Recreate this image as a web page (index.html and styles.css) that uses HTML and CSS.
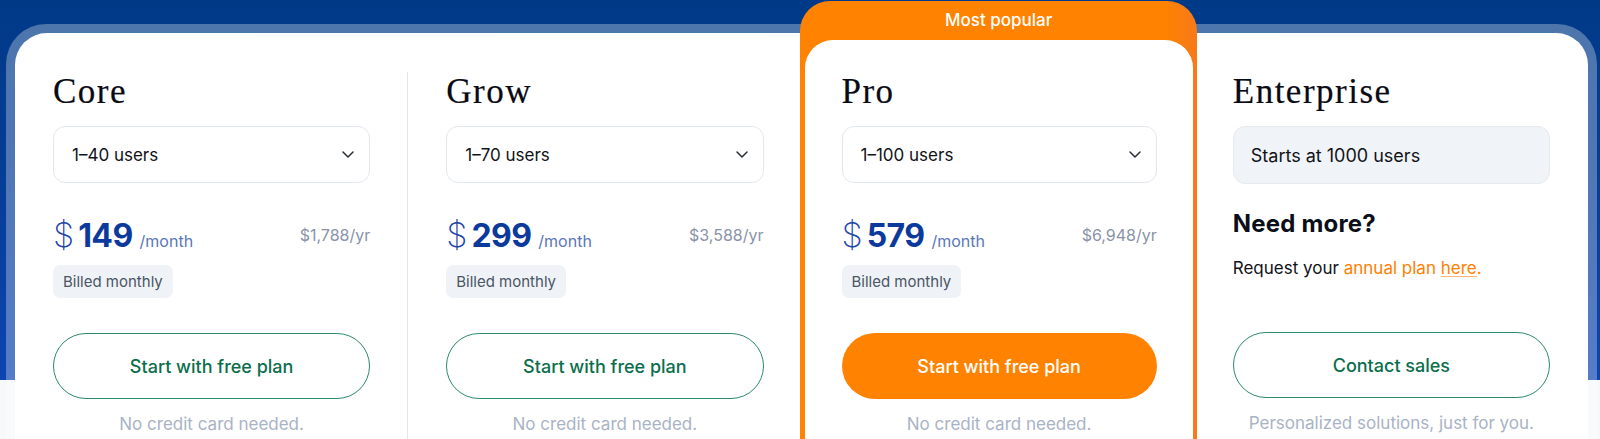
FILE: index.html
```html
<!DOCTYPE html>
<html lang="en">
<head>
<meta charset="utf-8">
<title>Pricing</title>
<link rel="stylesheet" href="styles.css">
</head>
<body>
<div class="page">
<div class="frame">
  <div class="card">
    <section class="col col-core">
      <h2 class="plan">Core</h2>
      <div class="select"><span>1–40 users</span><svg class="chev" viewBox="0 0 12 7" width="12" height="7"><path d="M1 1l5 5 5-5" fill="none" stroke="#2b2f36" stroke-width="1.5" stroke-linecap="round" stroke-linejoin="round"/></svg></div>
      <div class="price"><span class="cur">$</span><span class="amt">149</span><span class="per">/month</span><span class="yr">$1,788/yr</span></div>
      <div class="chip">Billed monthly</div>
      <a class="btn btn-outline">Start with free plan</a>
      <p class="note">No credit card needed.</p>
    </section>
    <section class="col">
      <h2 class="plan">Grow</h2>
      <div class="select"><span>1–70 users</span><svg class="chev" viewBox="0 0 12 7" width="12" height="7"><path d="M1 1l5 5 5-5" fill="none" stroke="#2b2f36" stroke-width="1.5" stroke-linecap="round" stroke-linejoin="round"/></svg></div>
      <div class="price"><span class="cur">$</span><span class="amt">299</span><span class="per">/month</span><span class="yr">$3,588/yr</span></div>
      <div class="chip">Billed monthly</div>
      <a class="btn btn-outline">Start with free plan</a>
      <p class="note">No credit card needed.</p>
    </section>
    <section class="pro">
      <div class="pro-tag">Most popular</div>
      <div class="col pro-inner">
        <h2 class="plan">Pro</h2>
        <div class="select"><span>1–100 users</span><svg class="chev" viewBox="0 0 12 7" width="12" height="7"><path d="M1 1l5 5 5-5" fill="none" stroke="#2b2f36" stroke-width="1.5" stroke-linecap="round" stroke-linejoin="round"/></svg></div>
        <div class="price"><span class="cur">$</span><span class="amt">579</span><span class="per">/month</span><span class="yr">$6,948/yr</span></div>
        <div class="chip">Billed monthly</div>
        <a class="btn btn-fill">Start with free plan</a>
        <p class="note">No credit card needed.</p>
      </div>
    </section>
    <section class="col">
      <h2 class="plan">Enterprise</h2>
      <div class="starts">Starts at 1000 users</div>
      <h3 class="more">Need more?</h3>
      <p class="req">Request your <span class="orange">annual plan <u>here</u>.</span></p>
      <a class="btn btn-outline btn-ent">Contact sales</a>
      <p class="note">Personalized solutions, just for you.</p>
    </section>
  </div>
</div>
</div>
</body>
</html>
```
FILE: styles.css
```css
* { box-sizing: border-box; }
html, body { margin: 0; padding: 0; height: 439px; overflow: hidden; }
body {
  font-family: Inter, "Noto Sans", sans-serif;
  background: #f7f8fa;
}
.page {
  height: 439px;
  padding: 24px 3px 0 6px;
  background: linear-gradient(to bottom, #003a87 0px, #063d96 180px, #0c45b0 380px, #f7f8fa 380px, #f7f8fa 100%);
}
.frame {
  height: 415px;
  padding: 9px 9px 0;
  background: rgba(255, 255, 255, 0.3);
  border-radius: 40px 40px 0 0;
}
.card {
  background: #fff;
  border-radius: 32px 32px 0 0;
  height: 100%;
  display: grid;
  grid-template-columns: repeat(4, 1fr);
}
.col {
  padding: 39px 38px 0;
  display: flex;
  flex-direction: column;
  min-width: 0;
}
.col-core {
  background: linear-gradient(#dfe6ef, #dfe6ef) no-repeat right 39px / 1px 100%;
}
.plan {
  margin: 0;
  font-family: "Liberation Serif", "DejaVu Serif", serif;
  font-weight: 400;
  font-size: 35px;
  line-height: 40px;
  letter-spacing: 1.5px;
  color: #0a0a14;
  -webkit-text-stroke: 0.2px #0a0a14;
}
.select {
  margin-top: 14px;
  height: 57px;
  border: 1px solid #e3e8ef;
  border-radius: 12px;
  display: flex;
  align-items: center;
  justify-content: space-between;
  padding: 0 15px 0 18px;
  font-size: 17px;
  color: #111318;
}
.price {
  margin-top: 32px;
  height: 40px;
  display: flex;
  align-items: baseline;
  color: #0c3a9c;
  line-height: 40px;
}
.cur {
  font-size: 34px;
  font-weight: 200;
  color: #1e45a8;
  margin-right: 4px;
}
.amt {
  font-size: 32px;
  font-weight: 700;
  letter-spacing: -0.6px;
}
.per {
  font-size: 16px;
  color: #5a77b8;
  margin-left: 7px;
}
.yr {
  margin-left: auto;
  font-size: 16px;
  color: #8a93a8;
  align-self: flex-start;
}
.chip {
  margin-top: 10px;
  align-self: flex-start;
  height: 33px;
  line-height: 33px;
  padding: 0 10px;
  background: #eff3f8;
  border-radius: 7px;
  font-size: 15px;
  color: #4b5563;
}
.btn {
  margin-top: 35px;
  height: 66px;
  flex: none;
  border-radius: 33px;
  display: flex;
  align-items: center;
  justify-content: center;
  font-size: 18px;
  font-weight: 500;
  text-decoration: none;
}
.btn-outline {
  border: 1px solid #2b8a68;
  color: #0b6e4d;
}
.btn-fill {
  background: #ff8200;
  color: #fff;
}
.note {
  margin: 13px 0 0;
  line-height: 24px;
  text-align: center;
  font-size: 17px;
  color: #a9b3c6;
  white-space: nowrap;
}
.pro {
  margin: -32px -2px 0 -2px;
  background: linear-gradient(to right, #ff8200 0%, #ff8200 92%, #f7791a 100%);
  border-radius: 30px 30px 0 0;
  padding: 0 4px 0 5px;
  display: flex;
  flex-direction: column;
  min-width: 0;
}
.pro-tag {
  height: 39px;
  line-height: 38px;
  text-align: center;
  color: #fff;
  font-size: 17px;
  font-weight: 500;
}
.pro-inner {
  flex: 1;
  background: #fff;
  border-radius: 28px 28px 0 0;
  padding: 32px 36px 0 37px;
}
.starts {
  margin-top: 14px;
  height: 58px;
  background: #f0f4f8;
  border: 1px solid #e5eaf0;
  border-radius: 12px;
  display: flex;
  align-items: center;
  padding: 0 17px;
  font-size: 18px;
  color: #111318;
}
.more {
  margin: 25px 0 0;
  font-size: 24px;
  line-height: 30px;
  font-weight: 700;
  color: #0b0f19;
  letter-spacing: 0.2px;
}
.req {
  margin: 17px 0 0;
  font-size: 17px;
  line-height: 24px;
  color: #111318;
}
.orange { color: #ff8000; }
.orange u { text-decoration-color: #ffb27a; text-underline-offset: 2px; }
.btn-ent { margin-top: 52px; }
```
